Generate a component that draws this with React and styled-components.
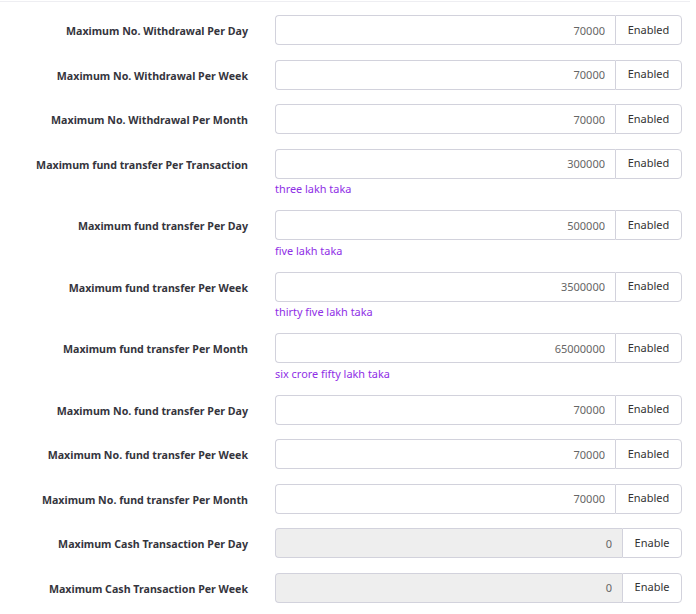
import React from "react";
import styled, { createGlobalStyle } from "styled-components";

const GlobalStyle = createGlobalStyle`
  html, body {
    margin: 0;
    padding: 0;
    background: #fff;
  }
  body {
    font-family: "Noto Sans", "Open Sans", sans-serif;
  }
`;

const limits = [
  { label: "Maximum No. Withdrawal Per Day", value: "70000", status: "Enabled" },
  { label: "Maximum No. Withdrawal Per Week", value: "70000", status: "Enabled" },
  { label: "Maximum No. Withdrawal Per Month", value: "70000", status: "Enabled" },
  { label: "Maximum fund transfer Per Transaction", value: "300000", status: "Enabled", hint: "three lakh taka" },
  { label: "Maximum fund transfer Per Day", value: "500000", status: "Enabled", hint: "five lakh taka" },
  { label: "Maximum fund transfer Per Week", value: "3500000", status: "Enabled", hint: "thirty five lakh taka" },
  { label: "Maximum fund transfer Per Month", value: "65000000", status: "Enabled", hint: "six crore fifty lakh taka" },
  { label: "Maximum No. fund transfer Per Day", value: "70000", status: "Enabled" },
  { label: "Maximum No. fund transfer Per Week", value: "70000", status: "Enabled" },
  { label: "Maximum No. fund transfer Per Month", value: "70000", status: "Enabled" },
  { label: "Maximum Cash Transaction Per Day", value: "0", status: "Enable", disabled: true },
  { label: "Maximum Cash Transaction Per Week", value: "0", status: "Enable", disabled: true },
];

const Panel = styled.div`
  border-top: 1px solid #eeeef2;
  margin-top: 1px;
  margin-right: 6px;
  padding-top: 13px;
`;

const Row = styled.div`
  display: grid;
  grid-template-columns: 248px 407px;
  column-gap: 27px;
  margin-bottom: 14.5px;
`;

const Label = styled.label`
  box-sizing: border-box;
  height: 30px;
  padding-top: 2px;
  display: flex;
  align-items: center;
  justify-content: flex-end;
  font-size: 10.65px;
  font-weight: 700;
  color: #35353d;
  white-space: nowrap;
`;

const Field = styled.div`
  display: flex;
  flex-direction: column;
`;

const InputGroup = styled.div`
  display: flex;
  height: 30px;
`;

const Input = styled.input`
  flex: 1;
  min-width: 0;
  box-sizing: border-box;
  height: 30px;
  border: 1px solid #d2d2dc;
  border-right: none;
  border-radius: 4px 0 0 4px;
  background: ${(p) => (p.disabled ? "#eeeeee" : "#fff")};
  padding: 0 10px;
  text-align: right;
  font-family: inherit;
  font-size: 11px;
  color: #666;
  -webkit-text-fill-color: #666;
  opacity: 1;
  outline: none;
`;

const Addon = styled.span`
  box-sizing: border-box;
  width: ${(p) => (p.$narrow ? "60px" : "67px")};
  height: 30px;
  display: flex;
  align-items: center;
  justify-content: center;
  padding-bottom: 2px;
  border: 1px solid #d2d2dc;
  border-radius: 0 4px 4px 0;
  background: #fff;
  font-size: 11px;
  color: #333;
`;

const Hint = styled.div`
  font-size: 10.9px;
  line-height: 17px;
  color: #8f2ee6;
  margin-top: 1.5px;
  margin-bottom: -1.5px;
`;

export default function App() {
  return (
    <>
      <GlobalStyle />
      <Panel>
        {limits.map((l) => (
          <Row key={l.label}>
            <Label>{l.label}</Label>
            <Field>
              <InputGroup>
                <Input value={l.value} disabled={l.disabled} readOnly />
                <Addon $narrow={l.disabled}>{l.status}</Addon>
              </InputGroup>
              {l.hint && <Hint>{l.hint}</Hint>}
            </Field>
          </Row>
        ))}
      </Panel>
    </>
  );
}
